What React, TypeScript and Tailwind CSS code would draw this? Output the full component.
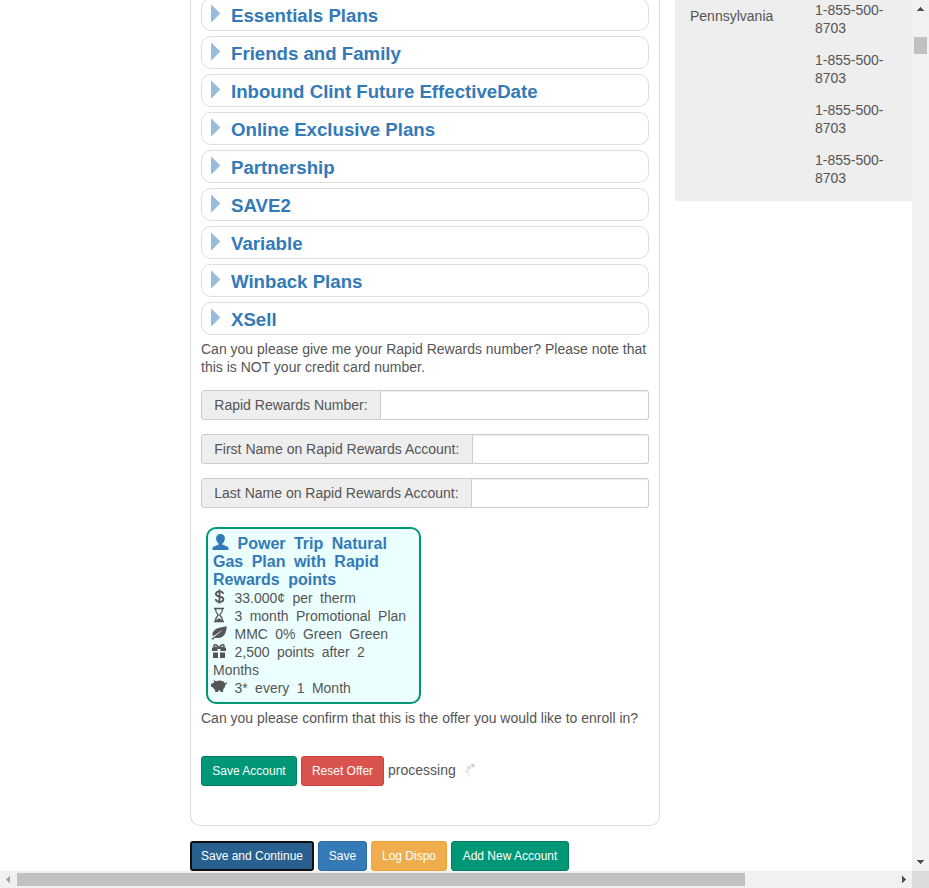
import type { ReactNode } from "react";

const plans = [
  "Essentials Plans",
  "Friends and Family",
  "Inbound Clint Future EffectiveDate",
  "Online Exclusive Plans",
  "Partnership",
  "SAVE2",
  "Variable",
  "Winback Plans",
  "XSell",
];

const fields = [
  { label: "Rapid Rewards Number:", width: "w-[180px]" },
  { label: "First Name on Rapid Rewards Account:", width: "w-[272px]" },
  { label: "Last Name on Rapid Rewards Account:", width: "w-[271px]" },
];

function Glyph({ children, className = "mr-[7.500px] -ml-[2px] w-4" }: { children: ReactNode; className?: string }) {
  return (
    <svg viewBox="0 0 16 16" className={`inline-block h-4 align-[-2px] ${className}`} fill="currentColor">
      {children}
    </svg>
  );
}

function Button({ children, className }: { children: ReactNode; className: string }) {
  return (
    <button className={`flex h-[30px] shrink-0 items-center justify-center rounded-[3px] text-[12px] leading-[18px] whitespace-nowrap text-white ${className}`}>
      {children}
    </button>
  );
}

function OfferCard() {
  return (
    <div className="mt-[19px] ml-[5px] h-[177px] w-[215px] rounded-[10px] border-2 border-[#009776] bg-[#ebffff] pt-[6px] pl-[5px]">
      <div className="text-[16px] leading-[18px] font-bold whitespace-nowrap text-[#337ab7] [word-spacing:4px]">
        <Glyph className="mr-[8.500px] -ml-px w-[17px] -translate-y-px">
          <path d="M8 0C5.300 0 3.600 1.700 3.600 4.400c0 2.100 1 3.800 2.400 5 .4.500.2 1-.4 1.300L1.400 12.500C.4 13 0 13.500 0 14.300V16h16v-1.700c0-.8-.4-1.300-1.400-1.800l-4.200-1.800c-.6-.3-.8-.8-.4-1.300 1.400-1.200 2.400-2.900 2.400-5C12.400 1.700 10.700 0 8 0z" />
        </Glyph>
        Power Trip Natural
        <br />
        Gas Plan with Rapid
        <br />
        Rewards points
      </div>
      <div className="text-[14px] leading-[18px] whitespace-nowrap [word-spacing:3.500px]">
        <div className="h-[18px]">
          <Glyph>
            <path d="M8.500 .5v14M12.200 4.700C11.800 3 10.600 2.400 8.500 2.400c-2.300 0-3.600 1-3.600 2.600 0 3.600 7.500 1.600 7.500 5.200 0 1.800-1.500 2.700-3.800 2.700-2.400 0-3.800-1-4-2.900" fill="none" stroke="currentColor" strokeWidth="1.800" />
          </Glyph>
          33.000¢ per therm
        </div>
        <div className="h-[18px]">
          <Glyph>
            <path d="M3 1.500h10M3 14.500h10M4.500 2c0 3 1 4.300 2.700 6C5.500 9.700 4.500 11 4.500 14M11.500 2c0 3-1 4.300-2.700 6 1.700 1.700 2.700 3 2.700 6" fill="none" stroke="currentColor" strokeWidth="1.300" />
            <path d="M5 14c.3-1.300 1.500-2 3-2.800 1.500.8 2.700 1.500 3 2.800z" />
          </Glyph>
          3 month Promotional Plan
        </div>
        <div className="h-[18px]">
          <Glyph>
            <path d="M15.500 1C13 2.600 8.500 2 5.200 4 1.500 6.200.8 9 2 11.200 5.200 9.200 8 7.300 11.800 4.700 8.900 8 4.500 10.600.5 13.800l1 1.200 2.500-2.300c5 1.200 8.800-1 10.300-4.400C15.500 5.500 15.800 3 15.500 1z" />
          </Glyph>
          MMC 0% Green Green
        </div>
        <div className="h-[18px]">
          <Glyph>
            <path d="M1 4.500h5.500V8H1zM9.500 4.500H15V8H9.500zM6.500 4.500h3V6h-3zM2 9.500h5V15H2zM9 9.500h5V15H9z" />
            <path d="M7.500 4.500C6.500 2.300 5.400 1.500 3.800 1.700 2.500 2 2.500 4.200 4 4.500zm1 0c1-2.200 2.100-3 3.700-2.800 1.300.3 1.300 2.500-.2 2.800z" fill="none" stroke="currentColor" strokeWidth="1.500" />
          </Glyph>
          2,500 points after 2
        </div>
        <div>Months</div>
        <div className="h-[18px]">
          <Glyph className="mr-[7.500px] -ml-[2px] w-4 -translate-y-px">
            <path d="M3.300 4 2.400 2l3 1.200C6.300 2.700 7.200 2.500 8.500 2.500c3 0 4.900 1.200 5.600 3.100.5-.1.800-.6.500-1.200l.9-.3c.6 1.300.1 2.400-1.200 2.600 0 1.900-.8 3.200-2 4.200L12 14H9.500l-.3-1.400H7.300L6.900 14H4.400l-.6-2.600C3 10.900 2.400 10.300 1.900 9.400L0 8.600V5.700l1.500-.1c.4-.7 1-1.200 1.800-1.600z" />
          </Glyph>
          3* every 1 Month
        </div>
      </div>
    </div>
  );
}

function Spinner() {
  return (
    <svg viewBox="0 0 16 16" className="ml-[3px] h-4 w-4">
      <circle cx="10" cy="2.500" r="2" fill="#d3d3d3" />
      <circle cx="6" cy="4.500" r="2" fill="#dcdcdc" />
      <circle cx="4" cy="8.300" r="2" fill="#e7e7e7" />
      <circle cx="6" cy="12.300" r="2" fill="#f2f2f2" />
    </svg>
  );
}

function Arrow({ d, className = "text-[#505050]" }: { d: string; className?: string }) {
  return (
    <svg viewBox="0 0 17 17" className={`h-[17px] w-[17px] shrink-0 ${className}`} shapeRendering="crispEdges">
      <path d={d} fill="currentColor" />
    </svg>
  );
}

export default function App() {
  return (
    <div className="grid h-[888px] w-[929px] grid-cols-[912px_17px] grid-rows-[871px_17px] overflow-hidden bg-white text-[14px] leading-[18px] text-[#555] [font-family:'Liberation_Sans',Arial,sans-serif]">
      <main className="flex items-start overflow-hidden pl-[190px]">
        <div className="w-[470px] shrink-0">
          <section className="h-[828px] rounded-b-[10px] border border-t-0 border-[#ddd] px-[10px]">
            <div className="-mt-[2px] flex flex-col gap-[5px]">
              {plans.map((plan) => (
                <div key={plan} className="flex h-[33px] items-center rounded-[10px] border border-[#ddd] pl-[9px]">
                  <svg viewBox="0 0 10 17" className="-mt-[2px] h-[17px] w-[10px]">
                    <path d="M0 0h.8L9.300 8.500.8 17H0z" fill="#99bcdb" />
                  </svg>
                  <span className="mt-[2px] ml-[10px] text-[18.650px] leading-[22px] font-bold text-[#337ab7]">{plan}</span>
                </div>
              ))}
            </div>
            <p className="mt-[5px] whitespace-nowrap">
              Can you please give me your Rapid Rewards number? Please note that
              <br />
              this is NOT your credit card number.
            </p>
            <div className="mt-[14px] flex flex-col gap-[14px]">
              {fields.map((field) => (
                <label key={field.label} className="flex h-[30px]">
                  <span className={`flex shrink-0 items-center rounded-l-[3px] border border-[#ccc] bg-[#eee] pl-[12.300px] whitespace-nowrap ${field.width}`}>
                    {field.label}
                  </span>
                  <input className="min-w-0 flex-1 rounded-r-[3px] border border-l-0 border-[#ccc] px-2 shadow-[inset_0_1px_1px_rgba(0,0,0,0.075)] outline-none" />
                </label>
              ))}
            </div>
            <OfferCard />
            <p className="mt-[5px]">Can you please confirm that this is the offer you would like to enroll in?</p>
            <div className="mt-[29px] flex items-center gap-1">
              <Button className="w-[96px] border border-[#007d62] bg-[#009776]">Save Account</Button>
              <Button className="w-[83px] border border-[#d43f3a] bg-[#d9534f]">Reset Offer</Button>
              <span className="-mt-[2px]">processing</span>
              <Spinner />
            </div>
          </section>
          <div className="mt-[15px] flex gap-1">
            <Button className="w-[124px] border-2 border-[#101010] bg-[#286090]">Save and Continue</Button>
            <Button className="w-[49px] border border-[#2e6da4] bg-[#337ab7]">Save</Button>
            <Button className="w-[76px] border border-[#eea236] bg-[#f0ad4e]">Log Dispo</Button>
            <Button className="w-[118px] border border-[#007d62] bg-[#009776]">Add New Account</Button>
          </div>
        </div>
        <aside className="ml-[15px] flex h-[201px] w-[237px] shrink-0 bg-[#eee] pl-[15px]">
          <div className="w-[125px] pt-[7px]">Pennsylvania</div>
          <div className="flex flex-col gap-[14px] pt-px">
            {[0, 1, 2, 3].map((n) => (
              <div key={n}>
                1-855-500-
                <br />
                8703
              </div>
            ))}
          </div>
        </aside>
      </main>
      <div className="flex flex-col items-center bg-[#f1f1f1]">
        <Arrow d="M8 7h1v1h1v1h1v1h1v1H5v-1h1V9h1V8h1z" />
        <div className="mt-[20px] h-[17px] w-[13px] bg-[#c1c1c1]" />
        <div className="flex-1" />
        <Arrow d="M5 6h7v1h-1v1h-1v1H9v1H8V9H7V8H6V7H5z" />
      </div>
      <div className="flex items-center bg-[#f1f1f1]">
        <Arrow className="text-[#a3a3a3]" d="M6 8h1V7h1V6h1V5h1v7H9v-1H8v-1H7V9H6z" />
        <div className="h-[13px] w-[728px] bg-[#c1c1c1]" />
        <div className="flex-1" />
        <Arrow d="M7 5h1v1h1v1h1v1h1v1h-1v1H9v1H8v1H7z" />
      </div>
      <div className="bg-[#dcdcdc]" />
    </div>
  );
}
